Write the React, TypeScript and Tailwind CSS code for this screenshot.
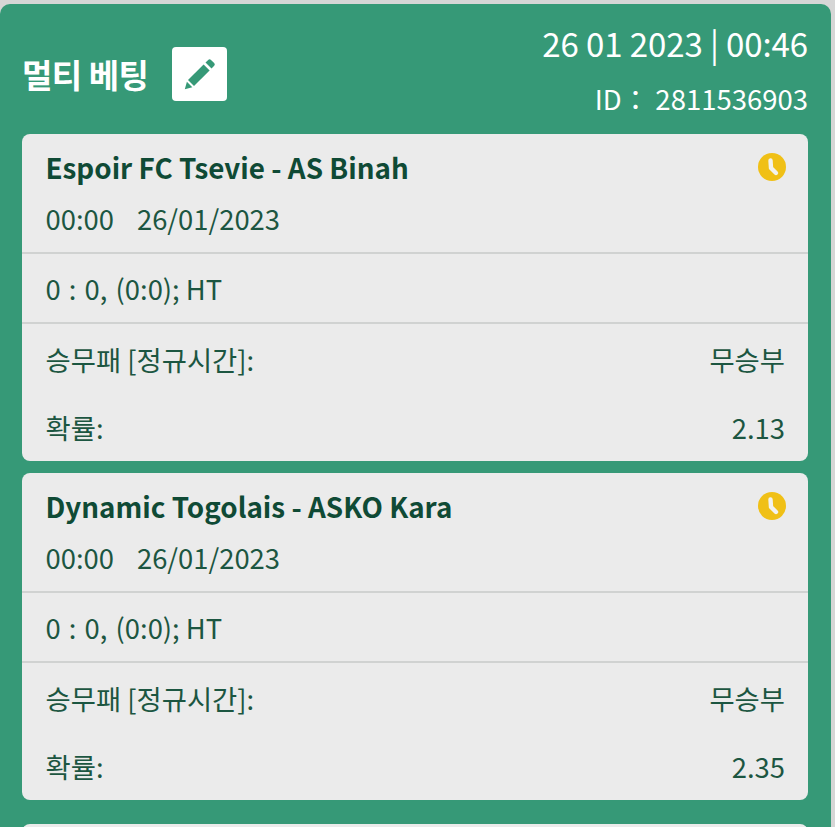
const bets = [
  { match: 'Espoir FC Tsevie - AS Binah', odds: '2.13' },
  { match: 'Dynamic Togolais - ASKO Kara', odds: '2.35' },
];

function PencilIcon() {
  return (
    <svg viewBox="0 0 32 32" className="w-[32px] h-[32px]" fill="#369977">
      <path d="M21.5 4.6 L24.2 1.9 Q25.6 0.6 27 1.9 L30.2 5 Q31.4 6.4 30.2 7.8 L27.5 10.5 Z" />
      <path d="M19.6 6.5 L25.6 12.4 L10 28 L4 22.1 Z" />
      <path d="M2.9 23.8 L8.3 29.2 L0.8 31.3 Z" />
    </svg>
  );
}

function ClockBadge() {
  return (
    <svg viewBox="0 0 28 28" className="w-[28px] h-[28px] shrink-0">
      <circle cx="14" cy="14" r="14" fill="#f0c016" />
      <path d="M12.5 7.5 L13 15 L18 20" fill="none" stroke="#f2f2ee" strokeWidth="4.4" strokeLinecap="round" strokeLinejoin="round" />
    </svg>
  );
}

function BetCard({ match, odds }: { match: string; odds: string }) {
  return (
    <div className="bg-[#ebebeb] rounded-[8px] text-[#1c5641] overflow-hidden">
      <div className="h-[120px] pl-[23.5px] pr-[23px] border-b-2 border-[#d0d2d1]">
        <div className="flex justify-between">
          <div className="pt-[14px] text-[27.8px] leading-[38px] font-bold text-[#0f4a35]">{match}</div>
          <div className="pt-[19px] -mr-[1px]">
            <ClockBadge />
          </div>
        </div>
        <div className="mt-[13px] text-[27.4px] leading-[38px] flex gap-[23px]">
          <span>00:00</span>
          <span>26/01/2023</span>
        </div>
      </div>
      <div className="h-[70px] pl-[23.5px] pr-[23px] border-b-2 border-[#d0d2d1] text-[27.4px] leading-[68px]">
        0<span className="mx-[2px]"> : </span>0,<span className="ml-[2px]"> </span>(0:0); HT
      </div>
      <div className="h-[137px] pl-[23.5px] pr-[23px] pt-[16px] text-[27.4px] leading-[38px]">
        <div className="flex justify-between">
          <span>승무패 [정규시간]:</span>
          <span>무승부</span>
        </div>
        <div className="flex justify-between mt-[30px]">
          <span>확률:</span>
          <span>{odds}</span>
        </div>
      </div>
    </div>
  );
}

export default function App() {
  return (
    <div className="h-[827px] overflow-hidden bg-[#d6d6d6] pt-[4px] pr-[4px] font-['Noto_Sans_CJK_KR',sans-serif]">
      <div className="bg-[#369977] rounded-t-[10px] h-[823px] pl-[22px] pr-[23px]">
        <div className="h-[130px] flex justify-between text-white">
          <div className="flex items-center gap-[24px] pt-[10px]">
            <span className="text-[33px] font-bold leading-[40px] tracking-[-0.5px]">멀티 베팅</span>
            <span className="w-[55px] h-[54px] bg-white rounded-[4px] flex items-center justify-center">
              <PencilIcon />
            </span>
          </div>
          <div className="text-right pt-[17px]">
            <div className="text-[33px] leading-[44px] tracking-[-0.1px]">26 01 2023 | 00:46</div>
            <div className="text-[27.5px] leading-[38px] mt-[14px]">ID： 2811536903</div>
          </div>
        </div>
        <div className="flex flex-col gap-[12px]">
          {bets.map((b) => (
            <BetCard key={b.match} {...b} />
          ))}
          <div className="h-[40px] bg-[#ebebeb] rounded-[8px] mt-[12px]" />
        </div>
      </div>
    </div>
  );
}
